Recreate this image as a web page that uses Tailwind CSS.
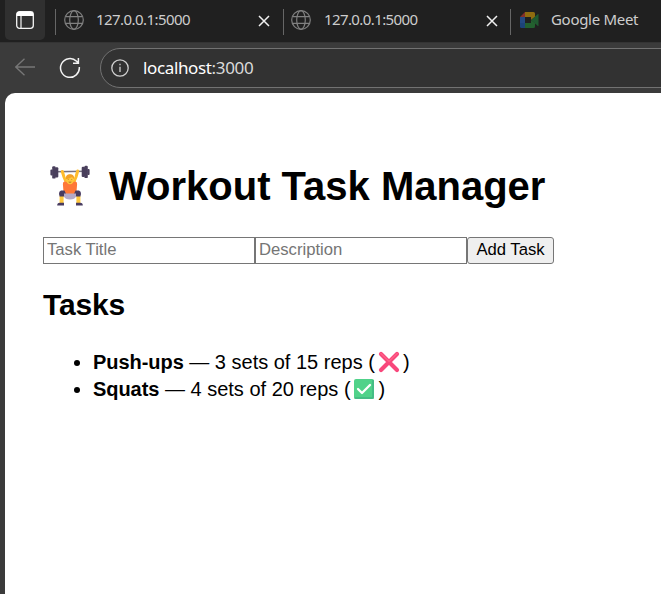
<!DOCTYPE html>
<html lang="en">
<head>
<meta charset="utf-8">
<title>Workout Task Manager</title>
<script src="https://cdn.jsdelivr.net/npm/@tailwindcss/browser@4"></script>
</head>
<body class="w-[661px] h-[594px] overflow-hidden bg-[#3b3b3b] flex flex-col">
<svg class="hidden">
  <symbol id="globe" viewBox="0 0 20 20"><g fill="none" stroke="#808080" stroke-width="1.2"><circle cx="10" cy="10" r="9.3"/><ellipse cx="10" cy="10" rx="4.3" ry="9.3"/><path d="M1.6 6.6H18.4M1.6 13.4H18.4"/></g></symbol>
  <symbol id="close" viewBox="0 0 12 12"><path d="M1 1L11 11M11 1L1 11" stroke="#f0f0f0" stroke-width="1.5" fill="none"/></symbol>
</svg>
<header class="shrink-0 h-[42px] bg-[#202020] flex items-start text-[15px] leading-[20px] text-[#cdcdcd] font-['Noto_Sans','Open_Sans',sans-serif] whitespace-nowrap">
  <div class="ml-[5px] w-[40px] h-[40px] rounded-b-[5px] bg-[#303030] pt-[11px] pl-[11px] shrink-0">
    <svg class="w-[18px] h-[18px]" viewBox="0 0 18 18"><rect x=".7" y=".7" width="16.6" height="16.6" rx="2.8" fill="none" stroke="#f5f5f5" stroke-width="1.3"/><path d="M.7 5V3.2Q.7.7 3.2.7H14.8Q17.3.7 17.3 3.2V5Z" fill="#fff"/><path d="M5 5V17" stroke="#f5f5f5" stroke-width="1.2"/></svg>
  </div>
  <div class="ml-[10px] mt-[9px] w-px h-[26px] bg-[#666] shrink-0"></div>
  <div class="w-[227px] shrink-0 flex pl-[8px]">
    <svg class="w-[20px] h-[20px] mt-[10px]"><use href="#globe"/></svg>
    <span class="ml-[12px] mt-[9px] w-[162px] tracking-[-0.56px]">127.0.0.1:5000</span>
    <svg class="w-[12px] h-[12px] mt-[15px]"><use href="#close"/></svg>
  </div>
  <div class="mt-[9px] w-px h-[26px] bg-[#666] shrink-0"></div>
  <div class="w-[226px] shrink-0 flex pl-[7px]">
    <svg class="w-[20px] h-[20px] mt-[10px]"><use href="#globe"/></svg>
    <span class="ml-[13px] mt-[9px] w-[162px] tracking-[-0.6px]">127.0.0.1:5000</span>
    <svg class="w-[12px] h-[12px] mt-[15px]"><use href="#close"/></svg>
  </div>
  <div class="mt-[9px] w-px h-[26px] bg-[#666] shrink-0"></div>
  <div class="flex pl-[9px]">
    <svg class="w-[19px] h-[16px] mt-[12px]" viewBox="0 0 19 16"><path d="M0 5H5V11H0Z" fill="#244982"/><path d="M0 11H5V16H1.5Q0 16 0 14.5Z" fill="#1c4379"/><path d="M0 5L5 0V5Z" fill="#842f29"/><path d="M5 0H13.5Q15 0 15 1.5V5L11 8V5H5Z" fill="#8f6c10"/><path d="M5 11H11V8L15 11V14.5Q15 16 13.5 16H5Z" fill="#23602f"/><path d="M11 8L17.6 2.2Q18.5 1.7 18.5 2.6V13.4Q18.5 14.3 17.6 13.8Z" fill="#205a30"/></svg>
    <span class="ml-[12px] mt-[9px] tracking-[-0.3px]">Google Meet</span>
  </div>
</header>
<nav class="shrink-0 h-[51px] flex items-start border-t border-[#343434]">
  <svg class="w-[20px] h-[18px] ml-[15px] mt-[15px] shrink-0" viewBox="0 0 20 18" fill="none" stroke="#777" stroke-width="1.3"><path d="M20 9H.8M9.5.7L.8 9L9.5 17.3"/></svg>
  <svg class="w-[22px] h-[22px] ml-[24px] mt-[14px] shrink-0" viewBox="0 0 22 22" fill="none" stroke="#f2f2f2" stroke-width="1.5"><path d="M20.3 10A9.4 9.4 0 1 1 17.6 4.3L19.4 6.1M19.4 1V6.3H14"/></svg>
  <div class="ml-[19px] mt-[5px] w-[580px] h-[40px] shrink-0 rounded-l-full border border-[#727272] bg-[#323232] flex items-start">
    <svg class="w-[18px] h-[18px] ml-[10px] mt-[10px]" viewBox="0 0 18 18" fill="none" stroke="#d0d0d0" stroke-width="1.3"><circle cx="9" cy="9" r="8.2"/><path d="M9 7.8V13M9 4.7V6.3"/></svg>
    <span class="ml-[14px] mt-[7px] text-[17px] leading-[24px] tracking-[-0.36px] text-white font-['Noto_Sans','Open_Sans',sans-serif]">localhost<span class="text-[#dadada]">:3000</span></span>
  </div>
</nav>
<main class="ml-[5px] grow rounded-tl-[10px] bg-white text-black pl-[38px] pt-[70px] text-[20px] font-['Liberation_Sans',Arial,sans-serif]">
  <h1 class="flex h-[46px] text-[40px] leading-[46px] font-bold whitespace-nowrap">
    <svg class="w-[40px] h-[42px] ml-[7px] mt-[2px] mr-[19px] shrink-0" viewBox="0 0 40 42">
      <path d="M4 6.8L37 6.2" stroke="#77717d" stroke-width="1.6"/>
      <g fill="#493f5c"><rect x=".4" y="4.5" width="2.4" height="6" rx="1"/><rect x="2.2" y="1.2" width="3.4" height="12.4" rx="1.2"/><rect x="5" y="2.2" width="3.3" height="10.4" rx="1.1"/><rect x="31.7" y="1.7" width="3.3" height="10.4" rx="1.1"/><rect x="34.4" y=".7" width="3.4" height="12.4" rx="1.2"/><rect x="37.2" y="4" width="2.4" height="6" rx="1"/></g>
      <path d="M12.3 6.5L14 12L16.5 18M27.7 6L26 12L23.5 18" stroke="#ffbd2d" stroke-width="3" stroke-linecap="round" stroke-linejoin="round" fill="none"/>
      <path d="M14.5 16.5L17 17Q20 20 23 17L25.5 16.5Q27.5 17 27.1 19.5L26.2 30H13.8L12.9 19.5Q12.5 17 14.5 16.5" fill="#ff7838"/>
      <path d="M16.3 15.5Q15.3 9.8 20 9.6Q24.7 9.8 23.7 15.5Q23 19.3 20 19.3T16.3 15.5" fill="#ffc83d"/>
      <path d="M16 14.2Q15.3 9.2 20 9.2Q24.7 9.2 24 14.2L22 12Q19 13.8 16 14.2" fill="#f4a126"/>
      <path d="M18.3 14.4V15M21.7 14.4V15M18.7 17Q20 17.6 21.3 17" stroke="#8a5526" stroke-width=".7" fill="none"/>
      <path d="M11.6 31V40M28.4 31V40" stroke="#ffc83d" stroke-width="4"/>
      <path d="M14.5 25.5L11 25.5Q8.8 26 9 29L9.6 31.5H14V29.5L16 29ZM25.5 25.5L29 25.5Q31.2 26 31 29L30.4 31.5H26V29.5L24 29Z" fill="#493c60"/>
      <path d="M14 28.5H26V31.5Q25 34.5 20 34.5T14 31.5Z" fill="#b6aac8"/>
      <path d="M7.2 40.5Q7 38 9.8 37.7H14V40.5ZM26 40.5V37.7H30.2Q33 38 32.8 40.5Z" fill="#493c60"/>
    </svg>
    <span>Workout Task Manager</span>
  </h1>
  <form class="flex mt-[28px] text-[16.67px] h-[27px]">
    <input type="text" placeholder="Task Title" class="w-[212px] h-[27px] border border-[#767676] pl-[3px] pb-[1px] placeholder:text-[#757575] placeholder:opacity-100">
    <input type="text" placeholder="Description" class="w-[212px] h-[27px] border border-[#767676] pl-[3px] pb-[1px] placeholder:text-[#757575] placeholder:opacity-100">
    <button type="button" class="w-[87px] h-[27px] border border-[#767676] rounded-[3px] bg-[#efefef] pb-[1px] leading-[24px] whitespace-nowrap">Add Task</button>
  </form>
  <h2 class="mt-[24px] text-[30px] leading-[34px] tracking-[-0.15px] font-bold">Tasks</h2>
  <ul class="mt-[27px] pl-[50px] list-disc leading-[27px]">
    <li><div class="flex whitespace-pre"><b class="tracking-[-0.05px]">Push-ups</b> — 3 sets of 15 reps (<svg class="w-[22px] h-[22px] ml-[3px] mr-[3px] mt-[2px]" viewBox="0 0 22 22"><path d="M3 3L19 19M19 3L3 19" stroke="#f8477b" stroke-width="4.2" stroke-linecap="round"/><path d="M2.7 2.4L11 10.4L19.3 2.4" stroke="#ff6488" stroke-width="1.2" fill="none" stroke-linecap="round"/></svg>)</div></li>
    <li><div class="flex whitespace-pre"><b class="tracking-[-0.05px]">Squats</b> — 4 sets of 20 reps (<svg class="w-[22px] h-[22px] ml-[2px] mr-[4px] mt-[2px]" viewBox="0 0 22 22"><rect x="1" y="1" width="20" height="20" rx="2" fill="#50d28a"/><path d="M1.5 20H20V2" stroke="#42b784" stroke-width="1.5" fill="none"/><path d="M5 11L9 15L17 7" stroke="#fff" stroke-width="2.3" fill="none" stroke-linecap="round" stroke-linejoin="round"/></svg>)</div></li>
  </ul>
</main>
</body>
</html>
